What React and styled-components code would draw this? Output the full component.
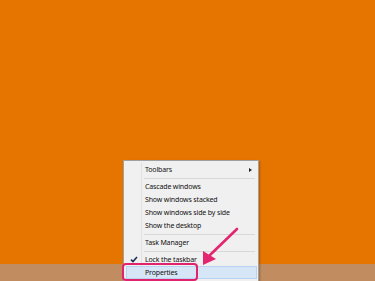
import React from "react";
import styled, { createGlobalStyle } from "styled-components";

const GlobalStyle = createGlobalStyle`
  html, body {
    margin: 0;
    padding: 0;
  }
  body {
    background: #e67500;
    font-family: "Noto Sans", "Open Sans", sans-serif;
  }
`;

const Screen = styled.div`
  position: relative;
  width: 375px;
  height: 281px;
  display: flex;
  flex-direction: column;
  overflow: hidden;
`;

const Desktop = styled.div`
  flex: 1;
  background: #e67500;
`;

const Taskbar = styled.div`
  height: 17px;
  background: #c18c60;
`;

// context menu floats over the desktop + taskbar
const Menu = styled.div`
  position: absolute;
  left: 123px;
  top: 160px;
  width: 131px;
  padding: 2px 1px 2px 2px;
  display: flex;
  flex-direction: column;
  background: #f0f0f0;
  border: 1px solid #a0a0a0;
  box-shadow: 1px 1px 2px rgba(0, 0, 0, 0.25);
`;

const Item = styled.div`
  height: 13px;
  display: flex;
  align-items: stretch;
  font-size: 7px;
  letter-spacing: -0.15px;
  color: #111;
  background: ${(p) => (p.$active ? "#d6e6f6" : "transparent")};
  box-shadow: ${(p) => (p.$active ? "inset 0 0 0 1px #b8d2ef" : "none")};
  white-space: nowrap;
`;

const IconCell = styled.span`
  width: 15px;
  display: flex;
  align-items: center;
  justify-content: center;
  border-right: 1px solid ${(p) => (p.$active ? "transparent" : "#e0e0e0")};
`;

const Label = styled.span`
  flex: 1;
  display: flex;
  align-items: center;
  padding-left: 3px;
`;

const SubArrow = styled.span`
  align-self: center;
  margin-right: 5px;
  width: 0;
  height: 0;
  border-top: 2.5px solid transparent;
  border-bottom: 2.5px solid transparent;
  border-left: 3px solid #222;
`;

const Separator = styled.div`
  height: 4px;
  display: flex;
  align-items: stretch;

  &::before {
    content: "";
    width: 15px;
    border-right: 1px solid #e0e0e0;
  }

  &::after {
    content: "";
    flex: 1;
    align-self: center;
    height: 1px;
    background: #d8d8d8;
    margin: 0 2px 0 2px;
  }
`;

const Callout = styled.div`
  position: absolute;
  left: 122px;
  top: 263px;
  width: 72px;
  height: 14px;
  border: 2px solid #e0236c;
  border-radius: 4px;
`;

const Pointer = styled.svg`
  position: absolute;
  left: 195px;
  top: 225px;
  width: 46px;
  height: 44px;
`;

const CheckMark = () => (
  <svg width="8" height="7" viewBox="0 0 8 7">
    <path d="M1 3.6 L3 5.6 L7 1" fill="none" stroke="#1c2f5a" strokeWidth="1.6" />
  </svg>
);

const MenuItem = ({ checked, active, submenu, children }) => (
  <Item $active={active}>
    <IconCell $active={active}>{checked && <CheckMark />}</IconCell>
    <Label>{children}</Label>
    {submenu && <SubArrow />}
  </Item>
);

export default function App() {
  return (
    <>
      <GlobalStyle />
      <Screen>
        <Desktop />
        <Taskbar />
        <Menu>
          <MenuItem submenu>Toolbars</MenuItem>
          <Separator />
          <MenuItem>Cascade windows</MenuItem>
          <MenuItem>Show windows stacked</MenuItem>
          <MenuItem>Show windows side by side</MenuItem>
          <MenuItem>Show the desktop</MenuItem>
          <Separator />
          <MenuItem>Task Manager</MenuItem>
          <Separator />
          <MenuItem checked>Lock the taskbar</MenuItem>
          <MenuItem active>Properties</MenuItem>
        </Menu>
        <Callout />
        <Pointer viewBox="0 0 46 44">
          <path d="M42 4 L15 30" stroke="#e3266f" strokeWidth="2.6" strokeLinecap="round" fill="none" />
          <path d="M8 40 L8 26 L21 34 Z" fill="#e3266f" />
        </Pointer>
      </Screen>
    </>
  );
}
